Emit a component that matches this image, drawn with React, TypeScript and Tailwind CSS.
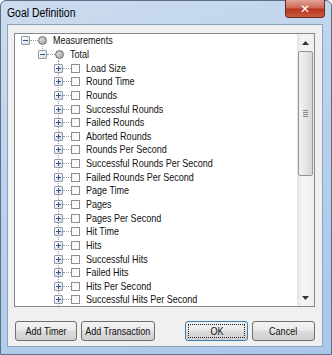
import React from "react";

const metrics = [
  "Load Size",
  "Round Time",
  "Rounds",
  "Successful Rounds",
  "Failed Rounds",
  "Aborted Rounds",
  "Rounds Per Second",
  "Successful Rounds Per Second",
  "Failed Rounds Per Second",
  "Page Time",
  "Pages",
  "Pages Per Second",
  "Hit Time",
  "Hits",
  "Successful Hits",
  "Failed Hits",
  "Hits Per Second",
  "Successful Hits Per Second",
];

const font = { fontFamily: '"Liberation Sans", Arial, sans-serif' };

function Expander({ open }: { open: boolean }) {
  return (
    <div className="relative z-10 flex h-[9px] w-[9px] shrink-0 items-center justify-center rounded-[1px] border border-[#919aa6] bg-gradient-to-br from-white to-[#d5dbe3]">
      <svg width="7" height="7" viewBox="0 0 7 7">
        <rect x="1" y="3" width="5" height="1" fill="#2d5391" />
        {!open && <rect x="3" y="1" width="1" height="5" fill="#2d5391" />}
      </svg>
    </div>
  );
}

function Connector() {
  return <div className="h-0 w-[8px] shrink-0 border-t border-dotted border-[#a0a0a0]" />;
}

function Circle() {
  return (
    <div className="relative z-10 h-[9px] w-[9px] shrink-0 rounded-full border border-[#6f6f6f] bg-[radial-gradient(circle_at_35%_35%,#d8d8d8,#9a9a9a)]" />
  );
}

function Check() {
  return (
    <div className="relative z-10 h-[9px] w-[9px] shrink-0 border border-[#8e8f8f] bg-gradient-to-br from-[#f4f4f4] to-white" />
  );
}

function Row({ pad, open, icon, label }: { pad: string; open: boolean; icon: React.ReactNode; label: string }) {
  return (
    <div className={`flex h-[13.65px] items-center ${pad}`}>
      <Expander open={open} />
      <Connector />
      {icon}
      <span className="ml-[6px] inline-block origin-left scale-x-[0.82] whitespace-nowrap text-[11px] leading-none text-[#111]">
        {label}
      </span>
    </div>
  );
}

function Button({ label, w, focus }: { label: string; w: string; focus?: boolean }) {
  return (
    <div
      className={`flex h-[20px] ${w} items-center justify-center rounded-[3px] border ${
        focus ? "border-[#3c7fb1]" : "border-[#707070]"
      } bg-[linear-gradient(#f2f2f2_0%,#ebebeb_45%,#dddddd_50%,#cfcfcf_100%)] p-[2px] text-[11px] text-[#111]`}
    >
      <div
        className={`flex h-full w-full items-center justify-center ${
          focus ? "border border-dotted border-[#222]" : ""
        }`}
      >
        <span className="inline-block scale-x-[0.82] whitespace-nowrap">{label}</span>
      </div>
    </div>
  );
}

export default function App() {
  return (
    <div className="h-[355px] w-[332px] bg-white" style={font}>
      <div className="flex h-full w-full flex-col rounded-t-[6px] border border-[#5d6f86] bg-[linear-gradient(160deg,#cddcef_0%,#bcd2ec_40%,#a9c7ea_100%)]">
        <div className="relative flex h-[23px] shrink-0 items-center pl-[6px]">
          <span className="inline-block origin-left scale-x-[0.87] text-[12px] text-black">Goal Definition</span>
          <div className="absolute right-[6px] top-[-1px] flex h-[18px] w-[40px] items-center justify-center rounded-b-[4px] border border-t-0 border-[#6b2b24] bg-[linear-gradient(#e1a396_0%,#cf6a58_45%,#b8361f_55%,#c85a3e_100%)]">
            <span className="text-[12px] font-bold leading-none text-white" style={{ fontFamily: '"DejaVu Sans", sans-serif' }}>
              ✕
            </span>
          </div>
        </div>
        <div className="mb-[7px] ml-[6px] mr-[8px] flex flex-1 flex-col border border-[#8ea3bd] bg-[#f0f0f0]">
          <div className="ml-[6px] mt-[8px] flex h-[274px] w-[301px] border border-[#828790] bg-white">
            <div className="relative flex-1 overflow-hidden">
              <div className="absolute left-[27px] top-[12px] h-[9px] border-l border-dotted border-[#a0a0a0]" />
              <div className="absolute left-[43px] top-[26px] h-[260px] border-l border-dotted border-[#a0a0a0]" />
              <Row pad="pl-[6px]" open icon={<Circle />} label="Measurements" />
              <Row pad="pl-[22.5px]" open icon={<Circle />} label="Total" />
              {metrics.map((m) => (
                <Row key={m} pad="pl-[39px]" open={false} icon={<Check />} label={m} />
              ))}
            </div>
            <div className="flex w-[17px] flex-col bg-[linear-gradient(90deg,#e3e3e3,#f5f5f5_30%,#f0f0f0)]">
              <div className="flex h-[17px] items-center justify-center">
                <svg width="7" height="4" viewBox="0 0 7 4">
                  <path d="M3.5 0L7 4H0z" fill="#333" />
                </svg>
              </div>
              <div className="mx-[1px] flex h-[125px] items-center justify-center rounded-[2px] border border-[#959595] bg-[linear-gradient(90deg,#f2f2f2,#e6e6e6_50%,#d6d6d6)]">
                <div className="flex flex-col gap-[1px]">
                  <div className="h-px w-[5px] bg-[#8a8a8a]" />
                  <div className="h-px w-[5px] bg-[#8a8a8a]" />
                  <div className="h-px w-[5px] bg-[#8a8a8a]" />
                  <div className="h-px w-[5px] bg-[#8a8a8a]" />
                </div>
              </div>
              <div className="flex-1" />
              <div className="flex h-[17px] items-center justify-center">
                <svg width="7" height="4" viewBox="0 0 7 4">
                  <path d="M0 0H7L3.5 4z" fill="#333" />
                </svg>
              </div>
            </div>
          </div>
          <div className="ml-[7px] mt-[14px] flex">
            <Button label="Add Timer" w="w-[62px]" />
            <div className="w-[4px]" />
            <Button label="Add Transaction" w="w-[74px]" />
            <div className="w-[30px]" />
            <Button label="OK" w="w-[63px]" focus />
            <div className="w-[4px]" />
            <Button label="Cancel" w="w-[63px]" />
          </div>
        </div>
      </div>
    </div>
  );
}
